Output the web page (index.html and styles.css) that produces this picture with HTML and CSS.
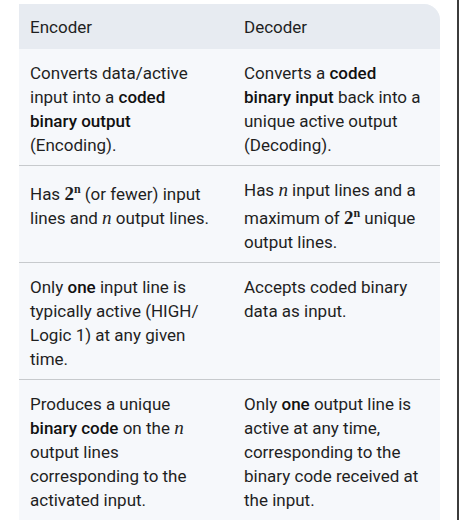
FILE: index.html
```html
<!DOCTYPE html>
<html lang="en">
<head>
<meta charset="utf-8">
<title>Encoder vs Decoder</title>
<link rel="stylesheet" href="styles.css">
</head>
<body>
<div class="frame">
  <div class="table">
    <div class="row head">
      <div class="cell">Encoder</div>
      <div class="cell">Decoder</div>
    </div>
    <div class="row">
      <div class="cell">Converts data/active input into a <b>coded binary output</b> (Encoding).</div>
      <div class="cell">Converts a <b>coded binary input</b> back into a unique active output (Decoding).</div>
    </div>
    <div class="row">
      <div class="cell">Has <span class="math">2<sup>n</sup></span> (or fewer) input lines and <i class="var">n</i> output lines.</div>
      <div class="cell">Has <i class="var">n</i> input lines and a maximum of <span class="math">2<sup>n</sup></span> unique output lines.</div>
    </div>
    <div class="row">
      <div class="cell">Only <b>one</b> input line is typically active (HIGH/ Logic 1) at any given time.</div>
      <div class="cell">Accepts coded binary data as input.</div>
    </div>
    <div class="row last">
      <div class="cell">Produces a unique <b>binary code</b> on the <i class="var">n</i> output lines corresponding to the activated input.</div>
      <div class="cell">Only <b>one</b> output line is active at any time, corresponding to the binary code received at the input.</div>
    </div>
  </div>
</div>
</body>
</html>
```
FILE: styles.css
```css
html, body {
  margin: 0;
  padding: 0;
  background: #ffffff;
}
body {
  font-family: Roboto, "Noto Sans", sans-serif;
  font-size: 17px;
  color: #1f1f1f;
}
.frame {
  width: 438px;
  height: 516px;
  border-right: 2px solid #3c3c3c;
  padding: 4px 0 0 19px;
  display: flex;
  flex-direction: column;
  overflow: hidden;
}
.table {
  flex: 1;
  width: 421px;
  background: #f6f8fb;
  border-top-right-radius: 16px;
  overflow: hidden;
}
.row {
  display: grid;
  grid-template-columns: 214px 1fr;
  border-bottom: 1px solid #c7cacd;
}
.row.last {
  border-bottom: none;
}
.cell {
  padding: 12px 13px 8px 11px;
  line-height: 24px;
}
.row .cell:first-child {
  padding-right: 18px;
}
.head {
  background: #e7ebf1;
  border-bottom: none;
  height: 45px;
  align-items: center;
}
.head .cell {
  padding-top: 0;
  padding-bottom: 0;
}
b {
  font-weight: 500;
  color: #111;
}
.math {
  display: inline-block;
  padding-top: 4px;
  line-height: 24px;
  font-family: "Liberation Serif", "DejaVu Serif", serif;
  font-weight: bold;
  font-size: 19px;
}
.math sup {
  font-size: 12px;
  vertical-align: 7px;
  line-height: 0;
}
.var {
  font-family: "Liberation Serif", "DejaVu Serif", serif;
  font-style: italic;
  font-size: 19px;
}
```
